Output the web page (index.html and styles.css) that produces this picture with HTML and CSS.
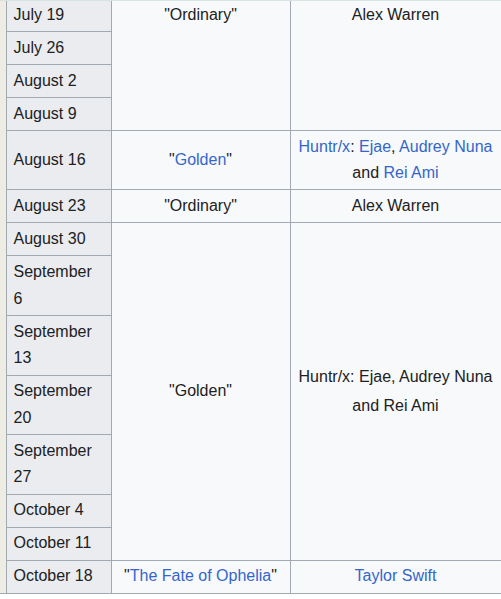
FILE: index.html
```html
<!DOCTYPE html>
<html lang="en">
<head>
<meta charset="utf-8">
<title>Chart</title>
<link rel="stylesheet" href="styles.css">
</head>
<body>
<div class="top-line"></div>
<table class="wikitable">
<colgroup>
<col class="c-strip">
<col class="c-date">
<col class="c-song">
<col class="c-artist">
</colgroup>
<tbody>
<tr>
<td class="strip" rowspan="17"></td>
<th class="date">July 19</th>
<td class="cell top" rowspan="4">"Ordinary"</td>
<td class="cell top" rowspan="4">Alex Warren</td>
</tr>
<tr><th class="date">July 26</th></tr>
<tr><th class="date">August 2</th></tr>
<tr><th class="date">August 9</th></tr>
<tr>
<th class="date">August 16</th>
<td class="cell">"<a href="#">Golden</a>"</td>
<td class="cell"><a href="#">Huntr/x</a>: <a href="#">Ejae</a>, <a href="#">Audrey Nuna</a> and <a href="#">Rei Ami</a></td>
</tr>
<tr>
<th class="date">August 23</th>
<td class="cell">"Ordinary"</td>
<td class="cell">Alex Warren</td>
</tr>
<tr>
<th class="date">August 30</th>
<td class="cell" rowspan="7">"Golden"</td>
<td class="cell loose" rowspan="7">Huntr/x: Ejae, Audrey Nuna and Rei Ami</td>
</tr>
<tr><th class="date">September 6</th></tr>
<tr><th class="date">September 13</th></tr>
<tr><th class="date">September 20</th></tr>
<tr><th class="date">September 27</th></tr>
<tr><th class="date">October 4</th></tr>
<tr><th class="date">October 11</th></tr>
<tr>
<th class="date">October 18</th>
<td class="cell">"<a href="#">The Fate of Ophelia</a>"</td>
<td class="cell"><a href="#">Taylor Swift</a></td>
</tr>
</tbody>
</table>
</body>
</html>
```

FILE: styles.css
```css
html, body {
  margin: 0;
  padding: 0;
  background: #ffffff;
}

body {
  font-family: "Liberation Sans", Arial, sans-serif;
  font-size: 16px;
  line-height: 26.6px;
  color: #202122;
  overflow: hidden;
}

.top-line {
  position: fixed;
  top: 0;
  left: 0;
  right: 0;
  height: 1px;
  background: #d9e3e3;
  z-index: 2;
}

.wikitable {
  border-collapse: collapse;
  table-layout: fixed;
  width: 501px;
  margin-top: -2px;
  background: #f8f9fa;
  color: #202122;
}

.c-strip { width: 6px; }
.c-date { width: 105px; }
.c-song { width: 179px; }
.c-artist { width: 211px; }

.wikitable th,
.wikitable td {
  border: 1px solid #a2a9b1;
  padding: 2.7px 6.4px 2.7px 7px;
}

.wikitable .strip {
  background: #eeede4;
  border-left: none;
  padding: 0;
}

.wikitable .date {
  background: #eaecf0;
  font-weight: normal;
  text-align: left;
}

.wikitable .cell {
  text-align: center;
  padding-left: 6.4px;
}

.wikitable .top {
  vertical-align: top;
}

.wikitable .loose {
  line-height: 29px;
}

a {
  color: #3366cc;
  text-decoration: none;
}
```
